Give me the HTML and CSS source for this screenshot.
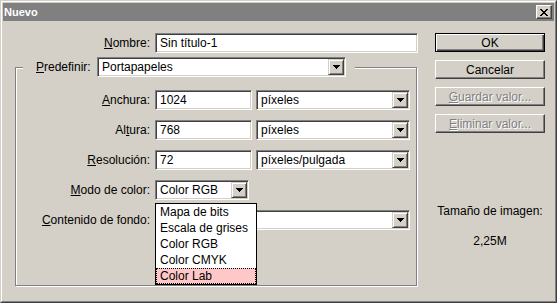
FILE: index.html
```html
<!DOCTYPE html>
<html lang="es">
<head>
    <meta charset="UTF-8">
    <title>Nuevo</title>
    <link rel="stylesheet" href="styles.css">
</head>
<body>

    <div class="window">
        <div class="frame">

            <!-- Title bar -->
            <div class="titlebar">
                <span class="title">Nuevo</span>
                <span class="close">
                    <svg width="8" height="7" viewBox="0 0 8 7" shape-rendering="crispEdges">
                        <rect x="0" y="0" width="2" height="1"/><rect x="6" y="0" width="2" height="1"/>
                        <rect x="1" y="1" width="2" height="1"/><rect x="5" y="1" width="2" height="1"/>
                        <rect x="2" y="2" width="4" height="1"/>
                        <rect x="3" y="3" width="2" height="1"/>
                        <rect x="2" y="4" width="4" height="1"/>
                        <rect x="1" y="5" width="2" height="1"/><rect x="5" y="5" width="2" height="1"/>
                        <rect x="0" y="6" width="2" height="1"/><rect x="6" y="6" width="2" height="1"/>
                    </svg>
                </span>
            </div>

            <div class="content">
                <!-- Left: form -->
                <div class="form">
                    <div class="row">
                        <label class="lbl"><u>N</u>ombre:</label>
                        <div class="field name">Sin título-1</div>
                    </div>

                    <div class="group">
                        <div class="group-head">
                            <label class="head-lbl"><u>P</u>redefinir:</label>
                            <div class="select preset">
                                <span class="val">Portapapeles</span>
                                <span class="drop"><svg width="7" height="4" shape-rendering="crispEdges"><rect x="0" y="0" width="7" height="1"/><rect x="1" y="1" width="5" height="1"/><rect x="2" y="2" width="3" height="1"/><rect x="3" y="3" width="1" height="1"/></svg></span>
                            </div>
                        </div>

                        <div class="rows">
                            <div class="row">
                                <label class="lbl"><u>A</u>nchura:</label>
                                <div class="field num">1024</div>
                                <div class="select unit">
                                    <span class="val">píxeles</span>
                                    <span class="drop"><svg width="7" height="4" shape-rendering="crispEdges"><rect x="0" y="0" width="7" height="1"/><rect x="1" y="1" width="5" height="1"/><rect x="2" y="2" width="3" height="1"/><rect x="3" y="3" width="1" height="1"/></svg></span>
                                </div>
                            </div>
                            <div class="row">
                                <label class="lbl">Al<u>t</u>ura:</label>
                                <div class="field num">768</div>
                                <div class="select unit">
                                    <span class="val">píxeles</span>
                                    <span class="drop"><svg width="7" height="4" shape-rendering="crispEdges"><rect x="0" y="0" width="7" height="1"/><rect x="1" y="1" width="5" height="1"/><rect x="2" y="2" width="3" height="1"/><rect x="3" y="3" width="1" height="1"/></svg></span>
                                </div>
                            </div>
                            <div class="row">
                                <label class="lbl"><u>R</u>esolución:</label>
                                <div class="field num">72</div>
                                <div class="select unit">
                                    <span class="val">píxeles/pulgada</span>
                                    <span class="drop"><svg width="7" height="4" shape-rendering="crispEdges"><rect x="0" y="0" width="7" height="1"/><rect x="1" y="1" width="5" height="1"/><rect x="2" y="2" width="3" height="1"/><rect x="3" y="3" width="1" height="1"/></svg></span>
                                </div>
                            </div>
                            <div class="row">
                                <label class="lbl"><u>M</u>odo de color:</label>
                                <div class="mode-wrap">
                                    <div class="select mode">
                                        <span class="val">Color RGB</span>
                                        <span class="drop"><svg width="7" height="4" shape-rendering="crispEdges"><rect x="0" y="0" width="7" height="1"/><rect x="1" y="1" width="5" height="1"/><rect x="2" y="2" width="3" height="1"/><rect x="3" y="3" width="1" height="1"/></svg></span>
                                    </div>
                                    <!-- open dropdown list -->
                                    <ul class="listbox">
                                        <li>Mapa de bits</li>
                                        <li>Escala de grises</li>
                                        <li>Color RGB</li>
                                        <li>Color CMYK</li>
                                        <li class="sel">Color Lab</li>
                                    </ul>
                                </div>
                            </div>
                            <div class="row">
                                <label class="lbl"><u>C</u>ontenido de fondo:</label>
                                <div class="select bg">
                                    <span class="val"></span>
                                    <span class="drop"><svg width="7" height="4" shape-rendering="crispEdges"><rect x="0" y="0" width="7" height="1"/><rect x="1" y="1" width="5" height="1"/><rect x="2" y="2" width="3" height="1"/><rect x="3" y="3" width="1" height="1"/></svg></span>
                                </div>
                            </div>
                        </div>
                    </div>
                </div>

                <!-- Right: buttons -->
                <div class="side">
                    <div class="btn default">OK</div>
                    <div class="btn">Cancelar</div>
                    <div class="btn disabled"><span><u>G</u>uardar valor...</span></div>
                    <div class="btn disabled"><span><u>E</u>liminar valor...</span></div>

                    <div class="info">Tamaño de imagen:</div>
                    <div class="info size">2,25M</div>
                </div>
            </div>

        </div>
    </div>

</body>
</html>
```

FILE: styles.css
```css
html, body {
    margin: 0;
    padding: 0;
    height: 100%;
}

body {
    font-family: "Liberation Sans", Arial, sans-serif;
    font-size: 12px;
    color: #000;
    background-color: #d4d0c8;
    overflow: hidden;
}

/* Window frame */
.window {
    box-sizing: border-box;
    width: 557px;
    height: 303px;
    border: 1px solid;
    border-color: #d4d0c8 #404040 #404040 #d4d0c8;
}

.frame {
    box-sizing: border-box;
    height: 100%;
    border: 1px solid;
    border-color: #fff #808080 #808080 #fff;
    padding: 1px;
    display: flex;
    flex-direction: column;
}

.titlebar {
    height: 18px;
    flex: 0 0 18px;
    background-color: #808080;
    display: flex;
    align-items: center;
    justify-content: space-between;
    padding-left: 1px;
    padding-right: 2px;
}

.title {
    color: #fff;
    font-weight: bold;
    font-size: 11px;
}

.close {
    box-sizing: border-box;
    width: 16px;
    height: 14px;
    background-color: #d4d0c8;
    border: 1px solid;
    border-color: #fff #404040 #404040 #fff;
    box-shadow: inset -1px -1px #808080;
    display: flex;
    align-items: center;
    justify-content: center;
    padding-right: 1px;
}

/* Dialog content */
.content {
    flex: 1;
    display: flex;
    padding-top: 12px;
}

.form {
    width: 432px;
}

.row {
    display: flex;
    align-items: center;
    height: 20px;
}

.lbl {
    width: 147px;
    margin-right: 5px;
    text-align: right;
    white-space: nowrap;
}

/* Sunken edit field */
.field {
    box-sizing: border-box;
    height: 20px;
    background-color: #fff;
    border: 1px solid;
    border-color: #808080 #fff #fff #808080;
    box-shadow: inset 1px 1px #404040, inset -1px -1px #d4d0c8;
    padding: 0 4px;
    display: flex;
    align-items: center;
}

.name {
    width: 263px;
}

/* Combo box */
.select {
    box-sizing: border-box;
    height: 20px;
    background-color: #fff;
    border: 1px solid;
    border-color: #808080 #fff #fff #808080;
    box-shadow: inset 1px 1px #404040, inset -1px -1px #d4d0c8;
    padding: 1px;
    display: flex;
}

.select .val {
    flex: 1;
    padding-left: 3px;
    display: flex;
    align-items: center;
    white-space: nowrap;
    overflow: hidden;
}

.drop {
    box-sizing: border-box;
    width: 16px;
    height: 16px;
    background-color: #d4d0c8;
    border: 1px solid;
    border-color: #d4d0c8 #404040 #404040 #d4d0c8;
    box-shadow: inset 1px 1px #fff, inset -1px -1px #808080;
    display: flex;
    align-items: center;
    justify-content: center;
}

/* Group box */
.group {
    box-sizing: border-box;
    width: 402px;
    height: 219px;
    margin: 14px 0 0 12px;
    border: 1px solid #808080;
    box-shadow: inset 1px 1px #fff, 1px 1px 0 #fff;
}

.group-head {
    display: flex;
    align-items: center;
    width: fit-content;
    height: 20px;
    margin: -11px 0 0 7px;
    padding: 0 9px 0 13px;
    background-color: #d4d0c8;
}

.head-lbl {
    width: 61px;
}

.preset {
    width: 249px;
}

.rows {
    display: flex;
    flex-direction: column;
    gap: 10px;
    margin-top: 13px;
}

.group .lbl {
    width: 134px;
}

.num {
    width: 97px;
}

.unit {
    width: 154px;
    margin-left: 4px;
}

.mode-wrap {
    position: relative;
}

.mode {
    width: 94px;
}

.bg {
    width: 255px;
}

/* Open list of the colour mode combo */
.listbox {
    position: absolute;
    left: 0;
    top: 23px;
    width: 102px;
    box-sizing: border-box;
    margin: 0;
    padding: 0;
    list-style: none;
    background-color: #fff;
    border: 1px solid #000;
    z-index: 2;
}

.listbox li {
    height: 16px;
    line-height: 16px;
    padding-left: 4px;
    white-space: nowrap;
}

.listbox li.sel {
    background-color: #ffc8c8;
    outline: 1px dotted #000;
    outline-offset: -1px;
}

/* Buttons */
.side {
    width: 110px;
    display: flex;
    flex-direction: column;
}

.btn {
    box-sizing: border-box;
    height: 19px;
    margin-bottom: 8px;
    background-color: #d4d0c8;
    border: 1px solid;
    border-color: #fff #404040 #404040 #fff;
    box-shadow: inset -1px -1px #808080;
    display: flex;
    align-items: center;
    justify-content: center;
}

.btn.default {
    border-color: #000;
    box-shadow: inset 1px 1px #fff, inset -1px -1px #404040, inset -2px -2px #808080;
}

.btn.disabled {
    color: #808080;
    text-shadow: 1px 1px 0 #fff;
}

.info {
    margin-top: 63px;
    line-height: 14px;
    text-align: center;
    white-space: nowrap;
}

.info.size {
    margin-top: 16px;
}
```
